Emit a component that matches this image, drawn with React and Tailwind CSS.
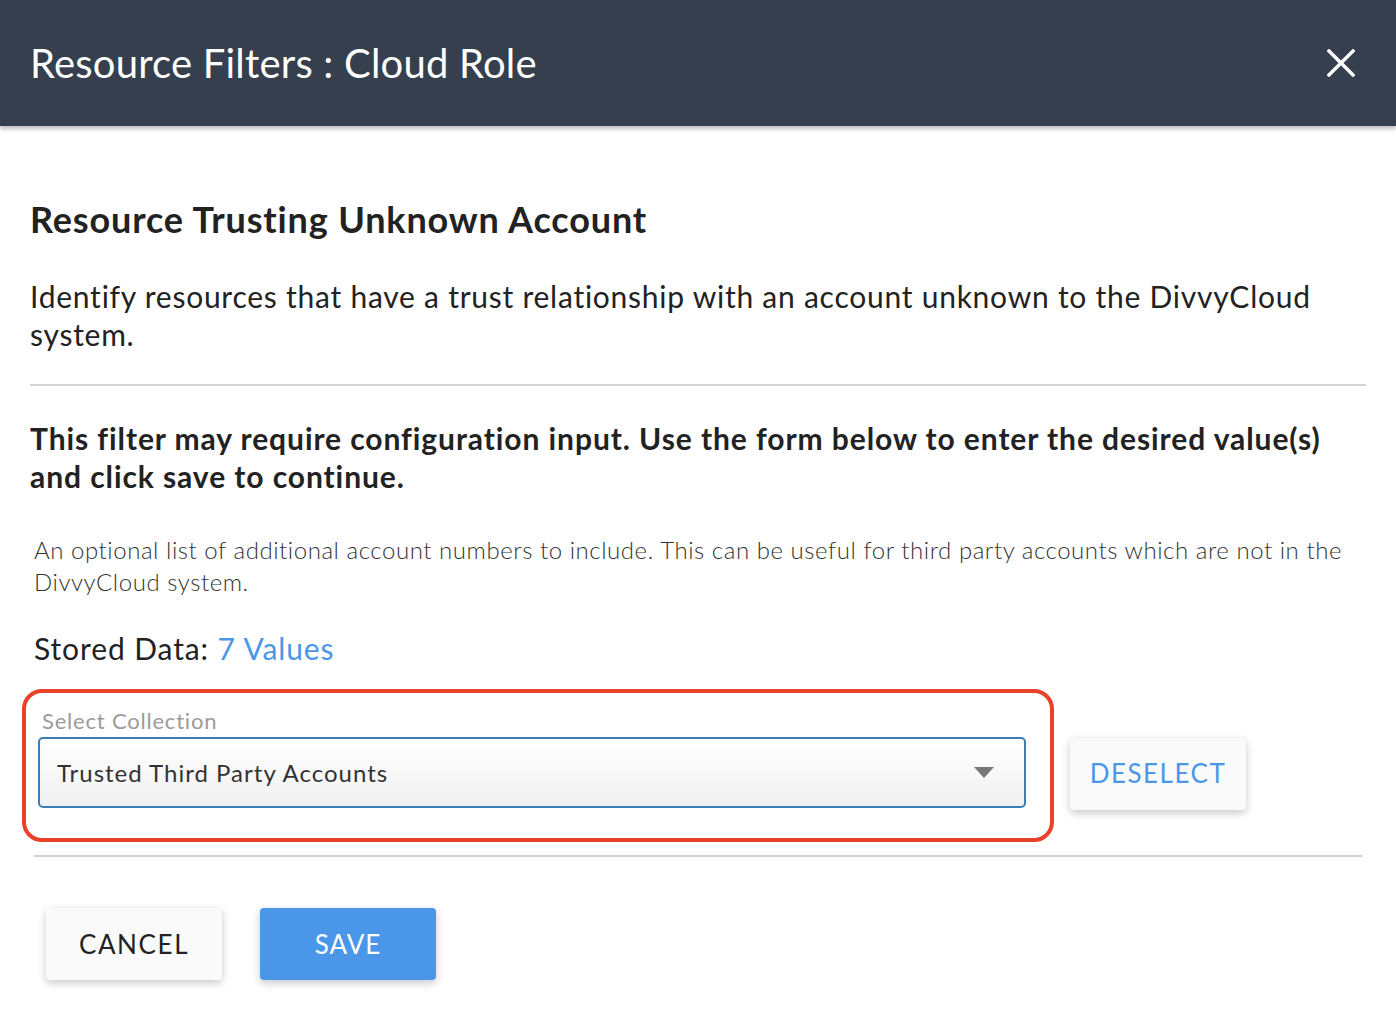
export default function App() {
  return (
    <div className="min-h-[1012px] w-[1396px] bg-white text-[#222] font-['Lato','Liberation_Sans',sans-serif]">
      {/* header */}
      <header className="h-[126px] bg-[#353f4e] flex items-center justify-between pl-[30px] pr-[40px] shadow-[0_3px_4px_rgba(0,0,0,0.25)] relative z-10">
        <h1 className="text-[40px] text-white font-normal tracking-[0.2px]">Resource Filters : Cloud Role</h1>
        <button className="text-white w-[30px] h-[30px] flex items-center justify-center">
          <svg width="28" height="28" viewBox="0 0 28 28" fill="none" stroke="currentColor" strokeWidth="3.4" strokeLinecap="square">
            <path d="M2 2L26 26M26 2L2 26" />
          </svg>
        </button>
      </header>

      <main className="px-[30px]">
        <h2 className="text-[36px] font-bold mt-[70px] leading-[46px] text-[#222] tracking-[0.85px]">Resource Trusting Unknown Account</h2>
        <p className="text-[30px] leading-[38px] mt-[35px] text-[#222] tracking-[0.75px]">
          Identify resources that have a trust relationship with an account unknown to the DivvyCloud system.
        </p>
        <hr className="border-t-2 border-[#d4d4d4] mt-[31px]" />

        <p className="text-[30px] leading-[38px] font-bold mt-[33px] text-[#222] tracking-[0.92px]">
          This filter may require configuration input. Use the form below to enter the desired value(s) and click save to continue.
        </p>

        <div className="px-[4px]">
          <p className="text-[24px] leading-[32px] font-light mt-[39px] text-[#333] tracking-[0.55px]">
            An optional list of additional account numbers to include. This can be useful for third party accounts which are not in the DivvyCloud system.
          </p>
          <p className="text-[30px] leading-[38px] mt-[31px] text-[#222] tracking-[0.9px]">
            Stored Data: <span className="text-[#4a97e8]">7 Values</span>
          </p>
        </div>

        <div className="flex items-center mt-[22px] -ml-[8px]">
          <div className="w-[1032px] h-[153px] border-[4px] border-[#e8432a] rounded-[20px] pl-[12px] pr-[24px] pt-[14px]">
            <div className="text-[22px] leading-[28px] text-[#9b9b9b] pl-[4px] tracking-[0.8px]">Select Collection</div>
            <div className="mt-[2px] h-[71px] border-2 border-[#3b7fb6] rounded-[5px] bg-gradient-to-b from-white to-[#f1f1f1] flex items-center justify-between pl-[17px] pr-[30px]">
              <span className="text-[24px] text-[#333] tracking-[1px]">Trusted Third Party Accounts</span>
              <svg width="20" height="11" viewBox="0 0 20 11">
                <path d="M0 0H20L10 11Z" fill="#777" />
              </svg>
            </div>
          </div>
          <button className="ml-[16px] mt-[16px] w-[176px] h-[72px] bg-[#fafafa] rounded-[4px] shadow-[0_3px_8px_rgba(0,0,0,0.22)] text-[26px] text-[#4a97e8] tracking-[1.5px]">
            DESELECT
          </button>
        </div>

        <hr className="border-t-2 border-[#d0d0d0] mt-[13px] ml-[4px] mr-[4px]" />

        <div className="flex gap-[38px] mt-[51px] pl-[16px]">
          <button className="w-[176px] h-[72px] bg-[#fafafa] rounded-[4px] shadow-[0_3px_8px_rgba(0,0,0,0.22)] text-[26px] text-[#222] tracking-[1.6px]">
            CANCEL
          </button>
          <button className="w-[176px] h-[72px] bg-[#4a96e8] rounded-[4px] shadow-[0_3px_8px_rgba(0,0,0,0.22)] text-[26px] text-white tracking-[1px]">
            SAVE
          </button>
        </div>
      </main>
    </div>
  );
}
